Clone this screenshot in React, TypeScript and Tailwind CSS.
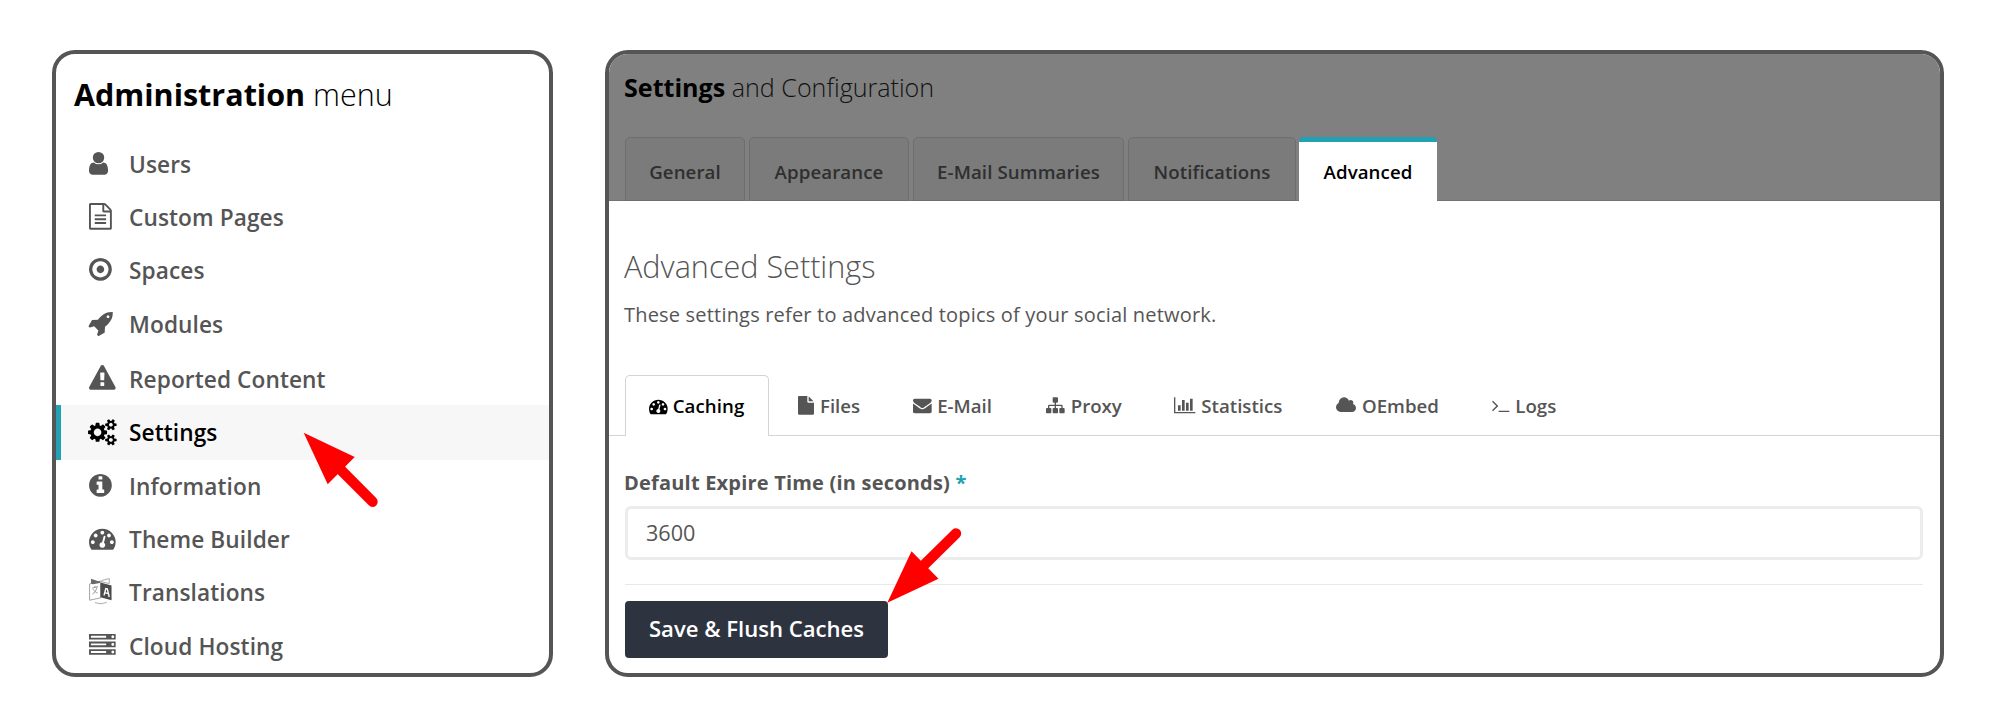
import React from "react";

type IconDef = { d: string; w?: number; x?: number };

const CIRCLE =
  "zm768 0q0 209-103 385.5t-279.5 279.5-385.5 103-385.5-103-279.5-279.5-103-385.5 103-385.5 279.5-279.5 385.5-103 385.5 103 279.5 279.5 103 385.5z";
const SMALL_COG =
  "v140q0 16-149 31-12 27-30 52 51 113 51 138 0 4-4 7-122 71-124 71-8 0-46-47t-52-68q-20 2-30 2t-30-2q-14 21-52 68t-46 47q-2 0-124-71-4-3-4-7 0-25 51-138-18-25-30-52-149-15-149-31v-140q0-16 149-31 13-29 30-52-51-113-51-138 0-4 4-7 4-2 35-20t59-34 30-16q8 0 46 46.5t52 67.5q20-2 30-2t30 2q51-71 92-112l6-2q4 0 124 70 4 3 4 7 0 25-51 138 17 23 30 52 149 15 149 31z";
const DOT = "q0-53-37.5-90.5t-90.5-37.5-90.5 37.5-37.5 90.5 37.5 90.5 90.5 37.5 90.5-37.5 37.5-90.5z";
const LED = "q0-40-28-68t-68-28-68 28-28 68 28 68 68 28 68-28 28-68z";

const icons: Record<string, IconDef> = {
  user: {
    x: 256,
    w: 1280,
    d: "M1536 1399q0 109-62.5 187t-150.5 78h-854q-88 0-150.5-78t-62.5-187q0-85 8.5-160.5t31.5-152 58.5-131 94-89 134.5-34.5q131 128 313 128t313-128q76 0 134.5 34.5t94 89 58.5 131 31.5 152 8.5 160.5zm-256-887q0 159-112.5 271.5t-271.5 112.5-271.5-112.5-112.5-271.5 112.5-271.5 271.5-112.5 271.5 112.5 112.5 271.5z",
  },
  page: {
    x: 128,
    w: 1536,
    d: "M1596 380q28 28 48 76t20 88v1152q0 40-28 68t-68 28h-1344q-40 0-68-28t-28-68v-1600q0-40 28-68t68-28h896q40 0 88 20t76 48zm-444-244v376h376q-10-29-22-41l-313-313q-12-12-41-22zm384 1528v-1024h-416q-40 0-68-28t-28-68v-416h-768v1536h1280zm-1024-864q0-14 9-23t23-9h704q14 0 23 9t9 23v64q0 14-9 23t-23 9h-704q-14 0-23-9t-9-23v-64zm736 224q14 0 23 9t9 23v64q0 14-9 23t-23 9h-704q-14 0-23-9t-9-23v-64q0-14 9-23t23-9h704zm0 256q14 0 23 9t9 23v64q0 14-9 23t-23 9h-704q-14 0-23-9t-9-23v-64q0-14 9-23t23-9h704z",
  },
  target: {
    x: 128,
    w: 1536,
    d:
      "M1152 896q0 106-75 181t-181 75-181-75-75-181 75-181 181-75 181 75 75 181zM896 352q-148 0-273 73t-198 198-73 273 73 273 198 198 273 73 273-73 198-198 73-273-73-273-198-198-273-73M896 896" +
      CIRCLE,
  },
  rocket: {
    x: 64,
    w: 1664,
    d: "M1440 448q0-40-28-68t-68-28-68 28-28 68 28 68 68 28 68-28 28-68zm224-288q0 249-75.5 430.5t-253.5 360.5q-81 80-195 176l-20 379q-2 16-16 26l-384 224q-7 4-16 4-12 0-23-9l-64-64q-13-14-8-32l85-276-281-281-276 85q-3 1-9 1-14 0-23-9l-64-64q-17-19-5-39l224-384q10-14 26-16l379-20q96-114 176-195 188-187 358-258t431-71q14 0 24 9.5t10 22.5z",
  },
  warning: {
    d: "M1024 1375v-190q0-14-9.5-23.5t-22.5-9.5h-192q-13 0-22.5 9.5t-9.5 23.5v190q0 14 9.5 23.5t22.5 9.5h192q13 0 22.5-9.5t9.5-23.5zm-2-374l18-459q0-12-10-19-13-11-24-11h-220q-11 0-24 11-10 7-10 21l17 457q0 10 10 16.5t24 6.5h185q14 0 23.5-6.5t10.5-16.5zm-14-934l768 1408q35 63-2 126-17 29-46.5 46t-63.5 17h-1536q-34 0-63.5-17t-46.5-46q-37-63-2-126l768-1408q17-31 47-49t65-18 65 18 47 49z",
  },
  cogs: {
    w: 1856,
    d:
      "M832 896q0-106-75-181t-181-75-181 75-75 181 75 181 181 75 181-75 75-181zm768 512q0-52-38-90t-90-38-90 38-38 90q0 53 37.5 90.5t90.5 37.5 90.5-37.5 37.5-90.5zm0-1024q0-52-38-90t-90-38-90 38-38 90q0 53 37.5 90.5t90.5 37.5 90.5-37.5 37.5-90.5zm-384 421v185q0 10-7 19.5t-16 10.5l-155 24q-11 35-32 76 34 48 90 115 7 11 7 20 0 12-7 19-23 30-82.5 89.5t-78.5 59.5q-11 0-21-7l-115-90q-37 19-77 31-11 108-23 155-7 24-30 24h-186q-11 0-20-7.5t-10-17.5l-23-153q-34-10-75-31l-118 89q-7 7-20 7-11 0-21-8-144-133-144-160 0-9 7-19 10-14 41-53t47-61q-23-44-35-82l-152-24q-10-1-17-9.5t-7-19.5v-185q0-10 7-19.5t16-10.5l155-24q11-35 32-76-34-48-90-115-7-11-7-20 0-12 7-20 22-30 82-89t79-59q11 0 21 7l115 90q34-18 77-32 11-108 23-154 7-24 30-24h186q11 0 20 7.5t10 17.5l23 153q34 10 75 31l118-89q8-7 20-7 11 0 21 8 144 133 144 160 0 8-7 19-12 16-42 54t-45 60q23 48 34 82l152 23q10 2 17 10.5t7 19.5zM1856 1338" +
      SMALL_COG +
      "M1856 314" +
      SMALL_COG,
  },
  info: {
    x: 128,
    w: 1536,
    d:
      "M1152 1376v-160q0-14-9-23t-23-9h-96v-512q0-14-9-23t-23-9h-320q-14 0-23 9t-9 23v160q0 14 9 23t23 9h96v320h-96q-14 0-23 9t-9 23v160q0 14 9 23t23 9h448q14 0 23-9t9-23zm-128-896v-160q0-14-9-23t-23-9h-192q-14 0-23 9t-9 23v160q0 14 9 23t23 9h192q14 0 23-9t9-23zM896 896" +
      CIRCLE,
  },
  gauge: {
    d:
      "M384 1152" + DOT + "M576 704" + DOT +
      "M1004 1185l101-382q6-26-7.5-48.5t-38.5-29.5-48 6.5-30 39.5l-101 382q-60 5-107 43.5t-63 98.5q-20 77 20 146t117 89 146-20 89-117q16-60-6-117t-72-91z" +
      "M1664 1152" + DOT + "M1024 512" + DOT + "M1472 704" + DOT +
      "M1792 1152q0 261-141 483-19 29-54 29h-1402q-35 0-54-29-141-221-141-483 0-182 71-348t191-286 286-191 348-71 348 71 286 191 191 286 71 348z",
  },
  server: {
    d:
      "M128 1408h1024v-128h-1024v128zm0-512h1024v-128h-1024v128zm0-512h1024v-128h-1024v128z" +
      "M1696 1344" + LED + "M1696 832" + LED + "M1696 320" + LED +
      "M1792 1152v384h-1792v-384h1792zm0-512v384h-1792v-384h1792zm0-512v384h-1792v-384h1792z",
  },
  file: {
    x: 128,
    w: 1536,
    d: "M1152 512v-472q22 14 36 28l408 408q14 14 28 36h-472zm-128 32q0 40 28 68t68 28h544v1056q0 40-28 68t-68 28h-1344q-40 0-68-28t-28-68v-1600q0-40 28-68t68-28h800v544z",
  },
  envelope: {
    d: "M1792 710v794q0 66-47 113t-113 47h-1472q-66 0-113-47t-47-113v-794q44 49 101 87 362 246 497 345 57 42 92.5 65.5t94.5 48 110 24.5h2q51 0 110-24.5t94.5-48 92.5-65.5q170-123 498-345 57-39 100-87zm0-294q0 79-49 151t-122 123q-376 261-468 325-10 7-42.5 31t-54 38.5-52 32.5-57.5 27-50 9h-2q-23 0-50-9t-57.5-27-52-32.5-54-38.5-42.5-31q-91-64-262-182.5t-205-142.5q-62-42-117-115.5t-55-136.5q0-78 41.5-130t118.5-52h1472q65 0 112.5 47t47.5 113z",
  },
  sitemap: {
    d: "M1792 1248v320q0 40-28 68t-68 28h-320q-40 0-68-28t-28-68v-320q0-40 28-68t68-28h96v-192h-512v192h96q40 0 68 28t28 68v320q0 40-28 68t-68 28h-320q-40 0-68-28t-28-68v-320q0-40 28-68t68-28h96v-192h-512v192h96q40 0 68 28t28 68v320q0 40-28 68t-68 28h-320q-40 0-68-28t-28-68v-320q0-40 28-68t68-28h96v-192q0-52 38-90t90-38h512v-192h-96q-40 0-68-28t-28-68v-320q0-40 28-68t68-28h320q40 0 68 28t28 68v320q0 40-28 68t-68 28h-96v192h512q52 0 90 38t38 90v192h96q40 0 68 28t28 68z",
  },
  chart: {
    w: 2048,
    d: "M640 896v512h-256v-512h256zm384-512v1024h-256v-1024h256zm1024 1152v128h-2048v-1536h128v1408h1920zm-640-896v768h-256v-768h256zm384-384v1152h-256v-1152h256z",
  },
  cloud: {
    x: 64,
    w: 1920,
    d: "M1984 1152q0 159-112.5 271.5t-271.5 112.5h-1088q-185 0-316.5-131.5t-131.5-316.5q0-132 71-241.5t187-163.5q-2-28-2-43 0-212 150-362t362-150q158 0 286.5 88t187.5 230q70-62 166-62 106 0 181 75t75 181q0 75-41 138 129 30 213 134.5t84 239.5z",
  },
  terminal: {
    x: 64,
    w: 1664,
    d: "M649 983l-466 466q-10 10-23 10t-23-10l-50-50q-10-10-10-23t10-23l393-393-393-393q-10-10-10-23t10-23l50-50q10-10 23-10t23 10l466 466q10 10 10 23t-10 23zm1079 457v64q0 14-9 23t-23 9h-960q-14 0-23-9t-9-23v-64q0-14 9-23t23-9h960q14 0 23 9t9 23z",
  },
};

function Icon({ name, className }: { name: string; className: string }) {
  const { d, x = 0, w = 1792 } = icons[name];
  return (
    <svg viewBox={`${x} 0 ${w} 1792`} className={`w-auto shrink-0 overflow-visible ${className}`} fill="currentColor" fillRule="evenodd">
      <path d={d} />
    </svg>
  );
}

function TranslateIcon() {
  return (
    <svg viewBox="0 0 24 27" className="h-[26.7px] w-auto shrink-0" fill="none">
      <path d="M.6 6 12 3v17L.6 22.5z" stroke="#a3a3a3" strokeWidth="1" />
      <path d="M2 .8l7.5 2.4L11 3v2L4 6.4 2 5.6z" fill="#6a6a6a" />
      <path d="M13 2.5 20.5.6v5L13 4z" stroke="#a0a0a0" strokeWidth=".9" />
      <path d="M11.5 4.6 22.8 7.6v15L11.5 19.6z" fill="#4c4c4c" />
      <path d="M15.2 17.6l1.8-7 1.5.4 2 8.2M15.8 14.8l3.6 1" stroke="#fff" strokeWidth="1.4" />
      <path d="M3 10.4l6-1.8M6 8v1.5M8 9.4c-.6 3-2.2 5.4-4.6 7M4.4 11.4c1 2 2.4 3.2 4.4 3.8" stroke="#9a9a9a" strokeWidth="1" />
      <path d="M6 24.8c4 1.6 8 1.4 12-.3" stroke="#b5b5b5" strokeWidth="1.2" />
    </svg>
  );
}

const menu = [
  { icon: "user", label: "Users", row: "h-[53.33px]" },
  { icon: "page", label: "Custom Pages", row: "h-[53.33px]" },
  { icon: "target", label: "Spaces", row: "h-[53.33px]" },
  { icon: "rocket", label: "Modules", row: "h-[53.33px]" },
  { icon: "warning", label: "Reported Content", row: "h-[54.67px] pt-[2px]" },
  { icon: "cogs", label: "Settings", row: "h-[55px]", active: true },
  { icon: "info", label: "Information", row: "-mt-px h-[53.33px]" },
  { icon: "gauge", label: "Theme Builder", row: "h-[53.33px]" },
  { icon: "translate", label: "Translations", row: "h-[53.33px]" },
  { icon: "server", label: "Cloud Hosting", row: "h-[53.33px]" },
];

const tabs = [
  { label: "General", width: "w-[120px]" },
  { label: "Appearance", width: "w-[160px]" },
  { label: "E-Mail Summaries", width: "w-[211px]" },
  { label: "Notifications", width: "w-[168px]" },
];

const subTabs = [
  { icon: "file", label: "Files", width: "w-[114.5px]" },
  { icon: "envelope", label: "E-Mail", width: "w-[133.5px]" },
  { icon: "sitemap", label: "Proxy", width: "w-[128px]" },
  { icon: "chart", label: "Statistics", width: "w-[162px]" },
  { icon: "cloud", label: "OEmbed", width: "w-[156px]" },
  { icon: "terminal", label: "Logs", width: "w-[120px]" },
];

function AdminMenu() {
  return (
    <aside className="h-[627px] w-[501px] shrink-0 overflow-hidden rounded-[23px] border-4 border-[#555] bg-white">
      <h2 className="mt-[17px] h-[46px] pl-[18px] text-[30.5px] leading-[46px] font-light whitespace-nowrap text-black">
        <strong className="font-bold">Administration</strong> menu
      </h2>
      <ul className="mt-[20px]">
        {menu.map((m) => (
          <li
            key={m.label}
            className={`flex items-center border-l-[5px] pl-[28px] text-[22.67px] font-semibold tracking-[0.09px] whitespace-nowrap ${m.row} ${
              m.active ? "border-[#21a1b3] bg-[#f7f7f7] text-black" : "border-transparent text-[#555]"
            }`}
          >
            <span className="flex w-[40px] pb-px">
              {m.icon === "translate" ? <TranslateIcon /> : <Icon name={m.icon} className="h-[26.67px]" />}
            </span>
            <span className="pt-[2px]">{m.label}</span>
          </li>
        ))}
      </ul>
    </aside>
  );
}

function SettingsPanel() {
  return (
    <main className="flex h-[627px] w-[1339px] shrink-0 flex-col overflow-hidden rounded-[23px] border-4 border-[#555] bg-white">
      <header className="flex h-[147px] shrink-0 flex-col justify-between border-b border-[#737373] bg-[#808080]">
        <h1 className="mt-[13px] pl-[15px] text-[25.1px] leading-[40px] font-light whitespace-nowrap text-[#111]">
          <strong className="font-bold text-black">Settings</strong> and Configuration
        </h1>
        <nav className="-mb-px flex gap-[4px] pl-[16px] text-[18.67px] font-semibold tracking-[0.1px] whitespace-nowrap text-[#2f2f2f]">
          {tabs.map((t) => (
            <a
              key={t.label}
              className={`flex h-[64px] items-center justify-center rounded-t-[5px] border border-[#6e6e6e] bg-[#7b7b7b] pt-[5px] ${t.width}`}
            >
              {t.label}
            </a>
          ))}
          <a className="-ml-px flex h-[64px] w-[138px] items-center justify-center rounded-t-[4px] border-t-[5px] border-[#21a1b3] bg-white text-black">
            Advanced
          </a>
        </nav>
      </header>
      <section className="pt-[40px]">
        <h2 className="pl-[15px] text-[30.6px] leading-[50px] font-light text-[#555]">Advanced Settings</h2>
        <p className="mt-[11px] pl-[15px] text-[20px] leading-[26px] tracking-[0.19px] whitespace-nowrap text-[#555]">
          These settings refer to advanced topics of your social network.
        </p>
      </section>
      <nav className="mt-[47px] flex h-[61px] shrink-0 items-end text-[18.67px] font-semibold whitespace-nowrap text-[#555]">
        <span className="h-[61px] w-[16px] border-b border-[#d4d4d4]" />
        <a className="flex h-[61px] w-[144px] items-center gap-[5px] rounded-t-[5px] border border-b-0 border-[#d4d4d4] pl-[23px] tracking-[0.1px] text-black">
          <Icon name="gauge" className="h-[18.67px]" />
          Caching
        </a>
        <span className="h-[61px] w-[29px] border-b border-[#d4d4d4]" />
        {subTabs.map((t) => (
          <a key={t.label} className={`flex h-[61px] items-center gap-[6px] border-b border-[#d4d4d4] pt-px ${t.width}`}>
            <Icon name={t.icon} className="h-[18.67px]" />
            {t.label}
          </a>
        ))}
        <span className="h-[61px] grow border-b border-[#d4d4d4]" />
      </nav>
      <form className="flex flex-col items-start pt-[34px] pr-[17px] pl-[16px]">
        <label className="-ml-px text-[20px] leading-[26px] font-bold tracking-[0.2px] whitespace-nowrap text-[#555]">
          Default Expire Time (in seconds) <span className="text-[#21a1b3]">*</span>
        </label>
        <div className="mt-[10px] flex h-[54px] w-full items-center rounded-[6px] border-[3px] border-[#ececec] pl-[18px] text-[21.6px] text-[#555]">
          3600
        </div>
        <hr className="mt-[24px] w-full border-t border-[#e8e8e8]" />
        <button
          type="button"
          className="mt-[16px] flex h-[57px] w-[263px] items-center justify-center rounded-[4px] bg-[#2e3340] pb-px text-[22.1px] font-semibold whitespace-nowrap text-white"
        >
          Save &amp; Flush Caches
        </button>
      </form>
    </main>
  );
}

export default function App() {
  return (
    <div className="relative flex h-[728px] w-[1995px] gap-[52px] overflow-hidden bg-white pt-[50px] pl-[52px] font-['Open_Sans',sans-serif]">
      <AdminMenu />
      <SettingsPanel />
      <svg className="pointer-events-none absolute top-[430px] left-[302px] h-[80px] w-[80px]" viewBox="298 430 80 80">
        <path d="M299.7 432.7l51 24.3-27 27.3z" fill="#f00" />
        <path d="M334 467l34.5 34.7" stroke="#f00" strokeWidth="10.4" strokeLinecap="round" />
      </svg>
      <svg className="pointer-events-none absolute top-[525px] left-[885px] h-[80px] w-[80px]" viewBox="885 525 80 80">
        <path d="M887.3 602.7l24.2-51.5 27 27.5z" fill="#f00" />
        <path d="M921 568l35-34.5" stroke="#f00" strokeWidth="10.4" strokeLinecap="round" />
      </svg>
    </div>
  );
}
